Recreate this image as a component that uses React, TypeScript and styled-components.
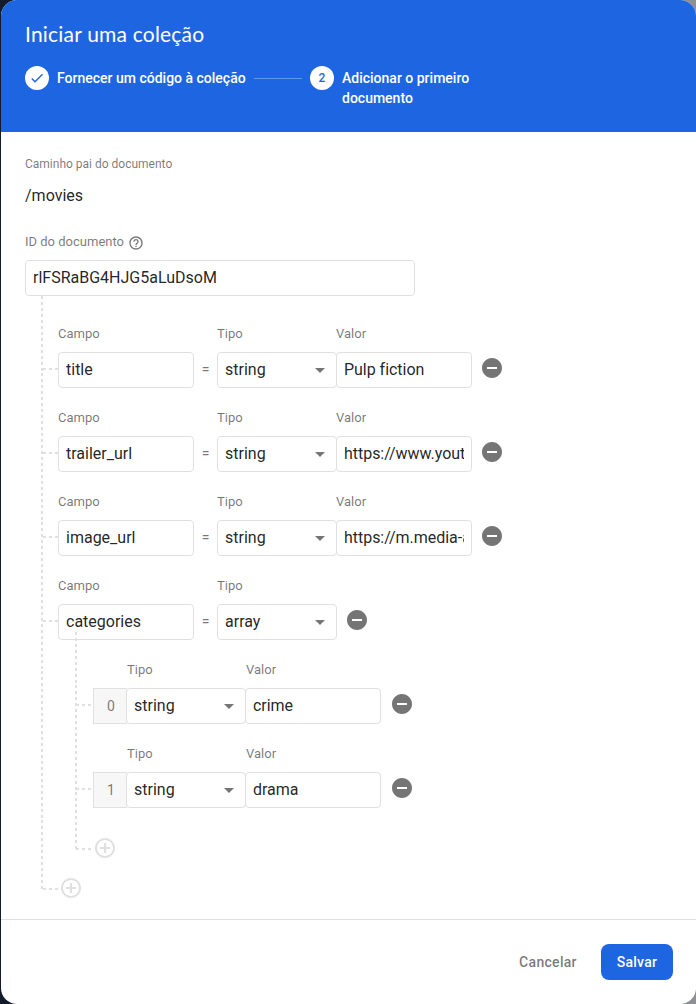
import React from "react";
import styled, { createGlobalStyle, css } from "styled-components";

const Global = createGlobalStyle`
  * { box-sizing: border-box; }
  body {
    margin: 0;
    font-family: Roboto, "Liberation Sans", sans-serif;
    color: rgba(0, 0, 0, 0.87);
    -webkit-font-smoothing: antialiased;
  }
`;

const BLUE = "#1e66e1";
const LINE = "#e0e0e0";
const dashX = `repeating-linear-gradient(90deg, ${LINE} 0 3px, transparent 3px 6px)`;
const dashY = (period: number) =>
  `repeating-linear-gradient(180deg, ${LINE} 0 3px, transparent 3px ${period}px)`;

const Backdrop = styled.div`
  height: 1004px;
  padding-left: 1px;
  background: linear-gradient(90deg, #141c2b 0 50%, #8f9095 50%);
`;

const Dialog = styled.section`
  height: 100%;
  display: flex;
  flex-direction: column;
  background: #fff;
  border-radius: 16px;
  overflow: hidden;
`;

const Header = styled.header`
  height: 132px;
  padding: 20px 24px 0;
  background: ${BLUE};
  color: #fff;
`;

const Title = styled.h1`
  margin: 0;
  font: 400 21px/28px Lato, Roboto, sans-serif;
  letter-spacing: 0.2px;
`;

const Stepper = styled.ol`
  list-style: none;
  margin: 18px 0 0;
  padding: 0;
  display: flex;
  align-items: flex-start;
  gap: 8px;
`;

const Step = styled.li`
  display: flex;
  gap: 8px;
`;

const StepMark = styled.span`
  flex: none;
  width: 24px;
  height: 24px;
  border-radius: 50%;
  background: #fff;
  color: ${BLUE};
  display: grid;
  place-items: center;
  font-size: 12px;
  font-weight: 500;
`;

const StepLabel = styled.span<{ $width: number; $wrap?: boolean }>`
  width: ${(p) => p.$width}px;
  padding-top: 2px;
  font-size: 14px;
  line-height: 20px;
  font-weight: 500;
  white-space: ${(p) => (p.$wrap ? "normal" : "nowrap")};
`;

const StepLine = styled.li`
  width: 48px;
  height: 1px;
  margin-top: 12px;
  background: rgba(255, 255, 255, 0.3);
`;

const Content = styled.main`
  flex: 1;
  padding: 22px 24px 0;
`;

const Label = styled.div<{ $small?: boolean }>`
  display: flex;
  align-items: center;
  height: 20px;
  padding-bottom: ${(p) => (p.$small ? 0 : 2)}px;
  font-size: ${(p) => (p.$small ? 12 : 13)}px;
  color: rgba(0, 0, 0, 0.54);
`;

const ParentPath = styled.div`
  margin: 10px 0 24px;
  height: 24px;
  font-size: 16px;
  line-height: 24px;
`;

const IdLabel = styled(Label)`
  margin-bottom: 8px;
  svg { margin: 3px 0 0 4px; }
`;

const box = css`
  height: 36px;
  border: 1px solid ${LINE};
  border-radius: 4px;
  background: #fff;
  font: 400 16px/20px Roboto, sans-serif;
  color: rgba(0, 0, 0, 0.87);
`;

const TextInput = styled.input<{ $width: number }>`
  ${box}
  display: block;
  width: ${(p) => p.$width}px;
  padding: 0 7px 2px;
  outline: none;
`;

const SelectBox = styled.div`
  ${box}
  width: 120px;
  padding: 0 11px 0 7px;
  display: flex;
  align-items: center;
  justify-content: space-between;
`;

const Caret = styled.span`
  border: 5px solid transparent;
  border-top-color: #757575;
  border-bottom: 0;
`;

const Tree = styled.div`
  margin-left: 16px;
  padding-top: 28px;
  background: ${dashY(5.96)} 0 0 / 2px 593px no-repeat;
`;

const Row = styled.div`
  display: flex;
  align-items: flex-end;
  margin-bottom: 20px;
`;

const Branch = styled.span<{ $nested?: boolean }>`
  width: ${(p) => (p.$nested ? 18 : 17)}px;
  height: 36px;
  flex: none;
  background: ${dashX} ${(p) => (p.$nested ? 1 : 2)}px 16px / 15px 2px no-repeat;
`;

const Column = styled.div<{ $joined?: boolean }>`
  display: grid;
  gap: 8px;
  margin-left: ${(p) => (p.$joined ? -1 : 0)}px;
`;

const Equals = styled.span`
  width: 23px;
  height: 36px;
  padding-bottom: 2px;
  display: grid;
  place-items: center;
  font-size: 14px;
  color: rgba(0, 0, 0, 0.54);
`;

const IconButton = styled.button<{ $gap?: number }>`
  width: 24px;
  height: 24px;
  margin: 0 0 8px ${(p) => p.$gap ?? 8}px;
  padding: 0;
  border: 0;
  background: none;
  color: #757575;
  svg { display: block; }
`;

const SubTree = styled.div`
  position: relative;
  margin: -20px 0 0 34px;
  padding-top: 20px;
  ${Label} { padding-left: 1px; }
  &::before {
    content: "";
    position: absolute;
    left: 0;
    top: -8px;
    width: 2px;
    height: 217px;
    background: ${dashY(5.944)};
  }
`;

const IndexCell = styled.span`
  width: 34px;
  height: 36px;
  margin-right: -1px;
  padding-left: 1px;
  border: 1px solid ${LINE};
  border-right: 0;
  background: #f7f7f7;
  display: grid;
  place-items: center;
  font-size: 14px;
  color: rgba(0, 0, 0, 0.54);
`;

const AddRow = styled.div<{ $top: number; $dash: number }>`
  display: flex;
  height: 24px;
  margin-top: ${(p) => p.$top}px;
  padding-left: 18px;
  background: ${dashX} ${(p) => p.$dash}px 12px / 15px 2px no-repeat;
  ${IconButton} { margin: 0; color: ${LINE}; }
`;

const Footer = styled.footer`
  height: 85px;
  padding: 24px 23px 0;
  border-top: 1px solid ${LINE};
  display: flex;
  justify-content: flex-end;
  gap: 8px;
`;

const Button = styled.button<{ $primary?: boolean }>`
  height: 36px;
  padding: 0;
  width: ${(p) => (p.$primary ? 72 : 90)}px;
  border: 0;
  border-radius: 8px;
  background: ${(p) => (p.$primary ? BLUE : "transparent")};
  color: ${(p) => (p.$primary ? "#fff" : "rgba(0,0,0,0.54)")};
  font: 500 14px/36px Roboto, sans-serif;
  letter-spacing: 0.3px;
`;

const Remove = ({ gap }: { gap?: number }) => (
  <IconButton $gap={gap} aria-label="Remover">
    <svg width="24" height="24" viewBox="0 0 24 24" fill="currentColor">
      <path d="M12 2C6.48 2 2 6.48 2 12s4.48 10 10 10 10-4.48 10-10S17.52 2 12 2zm5 11H7v-2h10v2z" />
    </svg>
  </IconButton>
);

const Add = () => (
  <IconButton aria-label="Adicionar">
    <svg width="24" height="24" viewBox="0 0 24 24" fill="currentColor">
      <path d="M13 7h-2v4H7v2h4v4h2v-4h4v-2h-4V7zm-1-5C6.48 2 2 6.48 2 12s4.48 10 10 10 10-4.48 10-10S17.52 2 12 2zm0 18c-4.41 0-8-3.59-8-8s3.59-8 8-8 8 3.59 8 8-3.59 8-8 8z" />
    </svg>
  </IconButton>
);

const TypeColumn = ({ value }: { value: string }) => (
  <Column>
    <Label>Tipo</Label>
    <SelectBox>
      {value}
      <Caret />
    </SelectBox>
  </Column>
);

const ValueInput = styled(TextInput)`
  letter-spacing: -0.03px;
`;

const ValueColumn = ({ value }: { value: string }) => (
  <Column $joined>
    <Label>Valor</Label>
    <ValueInput $width={136} defaultValue={value} />
  </Column>
);

const FieldRow = ({ name, type, value }: { name: string; type: string; value?: string }) => (
  <Row>
    <Branch />
    <Column>
      <Label>Campo</Label>
      <TextInput $width={136} defaultValue={name} />
    </Column>
    <Equals>=</Equals>
    <TypeColumn value={type} />
    {value && <ValueColumn value={value} />}
    <Remove />
  </Row>
);

const fields = [
  { name: "title", type: "string", value: "Pulp fiction" },
  { name: "trailer_url", type: "string", value: "https://www.youtube.com" },
  { name: "image_url", type: "string", value: "https://m.media-amazon.com" },
  { name: "categories", type: "array" },
];

export default function App() {
  return (
    <Backdrop>
      <Global />
      <Dialog>
        <Header>
          <Title>Iniciar uma coleção</Title>
          <Stepper>
            <Step>
              <StepMark>
                <svg width="16" height="16" viewBox="0 0 24 24" fill="currentColor">
                  <path d="M9 16.17L4.83 12l-1.42 1.41L9 19 21 7l-1.41-1.41z" />
                </svg>
              </StepMark>
              <StepLabel $width={189}>Fornecer um código à coleção</StepLabel>
            </Step>
            <StepLine />
            <Step>
              <StepMark>2</StepMark>
              <StepLabel $width={140} $wrap>Adicionar o primeiro documento</StepLabel>
            </Step>
          </Stepper>
        </Header>
        <Content>
          <Label $small>Caminho pai do documento</Label>
          <ParentPath>/movies</ParentPath>
          <IdLabel>
            ID do documento
            <svg width="16" height="16" viewBox="0 0 24 24" fill="currentColor">
              <path d="M11 18h2v-2h-2v2zm1-16C6.48 2 2 6.48 2 12s4.48 10 10 10 10-4.48 10-10S17.52 2 12 2zm0 18c-4.41 0-8-3.59-8-8s3.59-8 8-8 8 3.59 8 8-3.59 8-8 8zm0-14c-2.21 0-4 1.79-4 4h2c0-1.1.9-2 2-2s2 .9 2 2c0 2-3 1.75-3 5h2c0-2.25 3-2.5 3-5 0-2.21-1.79-4-4-4z" />
            </svg>
          </IdLabel>
          <TextInput $width={390} defaultValue="rlFSRaBG4HJG5aLuDsoM" />
          <Tree>
            {fields.map((f) => (
              <FieldRow key={f.name} {...f} />
            ))}
            <SubTree>
              {["crime", "drama"].map((value, i) => (
                <Row key={value}>
                  <Branch $nested />
                  <IndexCell>{i}</IndexCell>
                  <TypeColumn value="string" />
                  <ValueColumn value={value} />
                  <Remove gap={9} />
                </Row>
              ))}
              <AddRow $top={28} $dash={1}>
                <Add />
              </AddRow>
            </SubTree>
            <AddRow $top={16} $dash={2}>
              <Add />
            </AddRow>
          </Tree>
        </Content>
        <Footer>
          <Button>Cancelar</Button>
          <Button $primary>Salvar</Button>
        </Footer>
      </Dialog>
    </Backdrop>
  );
}
